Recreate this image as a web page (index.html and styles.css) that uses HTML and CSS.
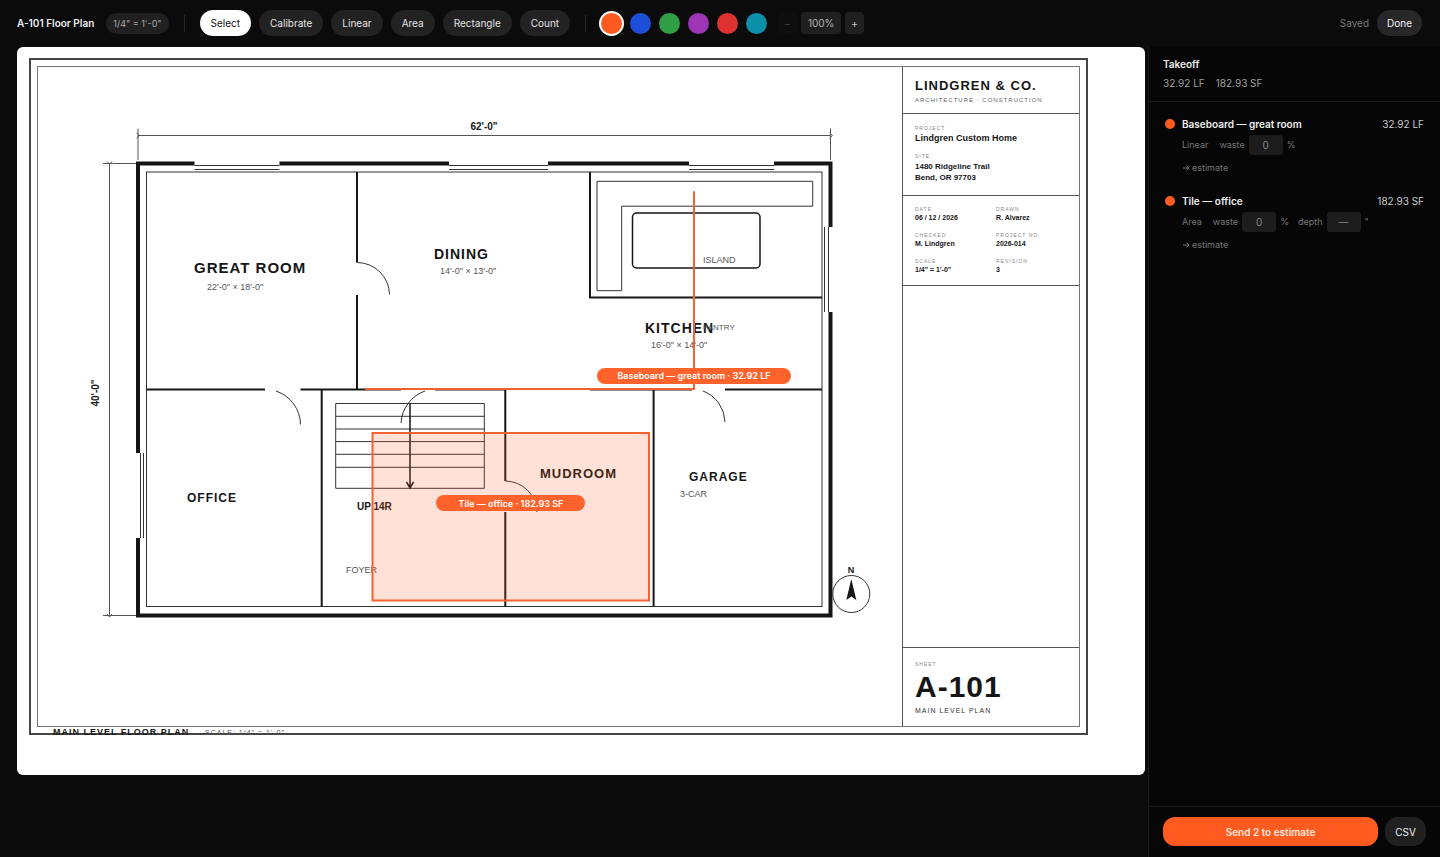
FILE: index.html
```html
<!DOCTYPE html>
<html lang="en">
<head>
<meta charset="utf-8">
<title>A-101 Floor Plan</title>
<link rel="stylesheet" href="styles.css">
</head>
<body class="app">
<header class="toolbar">
  <h1 class="doc-title">A-101 Floor Plan</h1>
  <span class="scale-chip">1/4" = 1'-0"</span>
  <span class="divider"></span>
  <nav class="tools" aria-label="Tools">
    <button class="pill pill-active" type="button">Select</button>
    <button class="pill" type="button">Calibrate</button>
    <button class="pill" type="button">Linear</button>
    <button class="pill" type="button">Area</button>
    <button class="pill" type="button">Rectangle</button>
    <button class="pill" type="button">Count</button>
  </nav>
  <span class="divider"></span>
  <div class="swatches">
    <button class="swatch swatch-orange swatch-active" type="button" aria-label="Orange"></button>
    <button class="swatch swatch-blue" type="button" aria-label="Blue"></button>
    <button class="swatch swatch-green" type="button" aria-label="Green"></button>
    <button class="swatch swatch-purple" type="button" aria-label="Purple"></button>
    <button class="swatch swatch-red" type="button" aria-label="Red"></button>
    <button class="swatch swatch-teal" type="button" aria-label="Teal"></button>
  </div>
  <div class="zoom">
    <button class="zoom-btn" type="button" aria-label="Zoom out" disabled>−</button>
    <button class="zoom-btn zoom-value" type="button">100%</button>
    <button class="zoom-btn" type="button" aria-label="Zoom in">+</button>
  </div>
  <span class="saved">Saved</span>
  <button class="pill pill-done" type="button">Done</button>
</header>

<div class="workspace">
<main class="canvas">
  <div class="sheet">
    <div class="frame">
      <div class="frame-inner">
        <svg class="plan" viewBox="38 67 864 659" role="img" aria-label="Main level floor plan">
          <!-- dimension lines -->
          <g class="thin">
            <path d="M138 135.500H830.500M138 128.500V160M830.500 128.500V160M136.500 133L139.500 135.500L136.500 138M829.500 133L832.500 135.500L829.500 138"/>
            <path d="M109.500 163.500V615.500M103 163.500H136M103 615.500H136M107 161.500L109.500 164.500L112 161.500M107 614L109.500 617L112 614"/>
          </g>
          <!-- exterior shell -->
          <rect class="shell" x="138" y="163.500" width="692.500" height="452"/>
          <rect class="line" x="146.500" y="172" width="675.500" height="434.500"/>
          <!-- windows -->
          <g class="opening">
            <rect x="194.500" y="161" width="85" height="6"/><rect x="449" y="161" width="99" height="6"/><rect x="689" y="161" width="85" height="6"/>
            <rect x="827" y="227" width="6" height="85"/><rect x="135" y="453" width="6" height="85"/>
          </g>
          <path class="line" d="M194.500 165.500H279.500M194.500 169.500H279.500M449 165.500H548M449 169.500H548M689 165.500H774M689 169.500H774M828.500 227V312M824.500 227V312M140.500 453V538M143.500 453V538"/>
          <!-- interior walls -->
          <path class="wall" d="M357 172V262.500M357 295V389.500M146.500 389.500H265M300.500 389.500H401M435 389.500H505M590 389.500H692M725 389.500H822M590 172V297.500H822M321.700 389.500V606.500M505.300 389.500V481M505.300 512V606.500M653.600 389.500V606.500"/>
          <!-- door swings -->
          <path class="line" d="M357 262.500A32.500 32.500 0 0 1 389.500 294.500M276 391A36 36 0 0 1 300.500 424.500M425 391A36 36 0 0 0 401 423M703 391A34 34 0 0 1 725 422M505.500 481A32 32 0 0 1 537 512"/>
          <!-- kitchen -->
          <path class="line" d="M597 181.300H812.700V206.200H621.700V290.700H597Z"/>
          <rect class="line heavy" x="632.500" y="213" width="127.500" height="55" rx="4"/>
          <!-- stairs -->
          <path class="line" d="M335.700 403.500H484.300V488.300H335.700ZM335.700 416.300H484M335.700 429H484M335.700 441.600H484M335.700 454.300H484M335.700 467.300H484"/>
          <path class="line heavy" d="M410 403.500V488M406.500 482L410 488L413.500 482"/>
          <!-- north arrow -->
          <circle class="line" cx="851.300" cy="594" r="18.500"/>
          <path class="ink" d="M851.300 579L856.300 600L851.300 596.500L846.300 600Z"/>
          <text class="north" x="851" y="573">N</text>

          <text class="dim-total" x="484" y="130">62'-0"</text>
          <text class="dim-total" transform="translate(99 393) rotate(-90)">40'-0"</text>
          <text class="room room-lg" x="194" y="273">GREAT ROOM</text>
          <text class="note" x="207" y="290">22'-0" × 18'-0"</text>
          <text class="room room-md" x="434" y="259">DINING</text>
          <text class="note" x="440" y="274">14'-0" × 13'-0"</text>
          <text class="room room-md" x="645" y="333">KITCHEN</text>
          <text class="note" x="651" y="348">16'-0" × 14'-0"</text>
          <text class="note" x="703" y="263">ISLAND</text>
          <text class="note note-sm" x="703" y="330">PANTRY</text>
          <text class="room room-sm" x="187" y="502">OFFICE</text>
          <text class="room" x="540" y="478">MUDROOM</text>
          <text class="room room-sm" x="689" y="481">GARAGE</text>
          <text class="note" x="680" y="497">3-CAR</text>
          <text class="note" x="346" y="573">FOYER</text>
          <text class="stair-label" x="357" y="510">UP 14R</text>
          <text class="caption" x="53" y="735">MAIN LEVEL FLOOR PLAN</text>
          <text class="caption-scale" x="205" y="735">SCALE: 1/4" = 1'-0"</text>

          <!-- takeoff overlay -->
          <rect class="area" x="372.500" y="433" width="276.500" height="167.500"/>
          <path class="run" d="M366 389H694V192"/>
          <rect class="tag" x="597" y="368" width="194" height="16" rx="8"/>
          <text class="tag-text" x="694" y="379">Baseboard — great room · 32.92 LF</text>
          <rect class="tag" x="436" y="495" width="149" height="16" rx="8"/>
          <text class="tag-text" x="511" y="507">Tile — office · 182.93 SF</text>
        </svg>

        <div class="title-block">
          <div class="tb-firm">
            <div class="firm">LINDGREN &amp; CO.</div>
            <div class="firm-sub">ARCHITECTURE · CONSTRUCTION</div>
          </div>
          <dl class="tb-project">
            <div><dt>PROJECT</dt><dd>Lindgren Custom Home</dd></div>
            <div><dt>SITE</dt><dd class="site">1480 Ridgeline Trail<br>Bend, OR 97703</dd></div>
          </dl>
          <dl class="tb-meta">
            <div><dt>DATE</dt><dd>06 / 12 / 2026</dd></div>
            <div><dt>DRAWN</dt><dd>R. Alvarez</dd></div>
            <div><dt>CHECKED</dt><dd>M. Lindgren</dd></div>
            <div><dt>PROJECT NO.</dt><dd>2026-014</dd></div>
            <div><dt>SCALE</dt><dd>1/4" = 1'-0"</dd></div>
            <div><dt>REVISION</dt><dd>3</dd></div>
          </dl>
          <div class="tb-sheet">
            <div class="tb-label">SHEET</div>
            <div class="sheet-no">A-101</div>
            <div class="sheet-name">MAIN LEVEL PLAN</div>
          </div>
        </div>
      </div>
    </div>
  </div>
</main>

<aside class="panel">
  <div class="panel-head">
    <h2 class="panel-title">Takeoff</h2>
    <div class="totals"><span>32.92 LF</span><span>182.93 SF</span></div>
  </div>
  <ul class="items">
    <li class="item">
      <span class="dot"></span>
      <span class="item-name">Baseboard — great room</span>
      <span class="item-qty">32.92 LF</span>
      <div class="item-fields">
        <span class="kind">Linear</span>
        <label class="field" for="waste1">waste</label><input class="num" id="waste1" placeholder="0"><span>%</span>
      </div>
      <button class="link" type="button"><svg class="arrow" viewBox="0 0 8 8" aria-hidden="true"><path d="M1 4H7M4.500 1.500L7 4L4.500 6.500"/></svg>estimate</button>
    </li>
    <li class="item">
      <span class="dot"></span>
      <span class="item-name">Tile — office</span>
      <span class="item-qty">182.93 SF</span>
      <div class="item-fields">
        <span class="kind">Area</span>
        <label class="field" for="waste2">waste</label><input class="num" id="waste2" placeholder="0"><span class="pct">%</span>
        <label class="field" for="depth2">depth</label><input class="num" id="depth2" placeholder="—"><span>"</span>
      </div>
      <button class="link" type="button"><svg class="arrow" viewBox="0 0 8 8" aria-hidden="true"><path d="M1 4H7M4.500 1.500L7 4L4.500 6.500"/></svg>estimate</button>
    </li>
  </ul>
  <div class="panel-foot">
    <button class="send" type="button">Send 2 to estimate</button>
    <button class="csv" type="button">CSV</button>
  </div>
</aside>
</div>
</body>
</html>
```
FILE: styles.css
```css
* { box-sizing: border-box; }

.app {
  margin: 0;
  min-height: 100vh;
  display: flex;
  flex-direction: column;
  background: #0b0b0b;
  color: #eee;
  font: 11px/16px Inter, "Liberation Sans", sans-serif;
}

button, input { font: inherit; color: inherit; border: 0; margin: 0; }
h1, h2, ul, dl, dd { margin: 0; padding: 0; }

/* Toolbar */
.toolbar {
  display: flex;
  align-items: center;
  height: 46px;
  padding: 0 18px 0 17px;
  font-size: 10px;
}
.doc-title { font-size: 10px; font-weight: 600; white-space: nowrap; }
.scale-chip {
  margin-left: 12px;
  padding: 0 7px;
  border-radius: 11px;
  background: #202020;
  color: #aaa;
  font-size: 9px;
  line-height: 21px;
  white-space: nowrap;
}
.divider { width: 1px; height: 17px; margin: 0 15px; background: #282828; }
.tools { display: flex; gap: 8px; }
.pill {
  height: 26px;
  padding: 0 11px;
  border-radius: 13px;
  background: #222;
  color: #e4e4e4;
}
.pill-active { background: #fff; color: #111; }
.pill-done { margin-left: 8px; padding: 0 10px; color: #f4f4f4; background: #272727; }
.swatches { display: flex; gap: 8px; }
.swatch { width: 21px; height: 21px; padding: 0; border-radius: 50%; }
.swatch-active { box-shadow: 0 0 0 2px #fff; }
.swatch-orange { background: #ff5a1f; }
.swatch-blue { background: #1d4ed8; }
.swatch-green { background: #2f9e44; }
.swatch-purple { background: #9c36b5; }
.swatch-red { background: #e03131; }
.swatch-teal { background: #0c8fa8; }
.zoom { display: flex; gap: 4px; margin-left: 11px; }
.zoom-btn {
  width: 19px;
  height: 22px;
  padding: 0;
  border-radius: 4px;
  background: #202020;
  color: #ccc;
}
.zoom-btn:disabled { background: #0e0e0e; color: #444; }
.zoom-value { width: 40px; color: #b4b4b4; }
.saved { margin-left: auto; color: #777; }

/* Drawing sheet */
.workspace { flex: 1; display: flex; }
.canvas { flex: 1; min-width: 0; padding: 1px 3px 0 17px; }
.sheet {
  padding: 11px 57px 40px 12px;
  border-radius: 6px;
  background: #fff;
  color: #161616;
  font-family: "Liberation Sans", Arial, sans-serif;
}
.frame { padding: 6px; border: 2px solid #454545; }
.frame-inner { display: flex; border: 1px solid #777; }
.plan { flex: 1; min-width: 0; display: block; overflow: visible; }

.plan .thin { fill: none; stroke: #555; stroke-width: 1; }
.plan .line { fill: none; stroke: #333; stroke-width: 1; }
.plan .heavy { stroke: #161616; stroke-width: 1.5; }
.plan .wall { fill: none; stroke: #161616; stroke-width: 2; }
.plan .shell { fill: none; stroke: #161616; stroke-width: 4; }
.plan .opening { fill: #fff; }
.plan .ink { fill: #161616; }
.plan text { fill: #161616; }
.plan .room { font-size: 13px; font-weight: 700; letter-spacing: 1px; }
.plan .room-sm { font-size: 12px; }
.plan .room-md { font-size: 14px; }
.plan .room-lg { font-size: 15px; }
.plan .note { font-size: 9px; fill: #555; }
.plan .note-sm { font-size: 8px; }
.plan .stair-label { font-size: 10px; font-weight: 700; }
.plan .dim-total { font-size: 10px; font-weight: 700; text-anchor: middle; }
.plan .north { font-size: 9px; font-weight: 700; text-anchor: middle; }
.plan .caption { font-size: 9px; font-weight: 700; letter-spacing: 1px; }
.plan .caption-scale { font-size: 7px; letter-spacing: 1px; fill: #555; }
.plan .area { fill: #ff5a1f; fill-opacity: 0.18; stroke: #f2632f; stroke-width: 2; }
.plan .run { fill: none; stroke: #f2632f; stroke-width: 2; stroke-linejoin: round; stroke-linecap: round; }
.plan .tag { fill: #ff622b; }
.plan .tag-text {
  fill: #fff;
  font-family: Inter, sans-serif;
  font-size: 9px;
  font-weight: 600;
  text-anchor: middle;
}

/* Title block */
.title-block {
  width: 177px;
  display: flex;
  flex-direction: column;
  border-left: 1px solid #555;
}
.tb-firm { height: 46px; padding: 11px 0 0 12px; }
.firm { font-size: 13px; font-weight: 700; line-height: 16px; letter-spacing: 1px; }
.firm-sub { font-size: 6px; line-height: 12px; letter-spacing: 1px; color: #666; }
dt, .tb-label { font-size: 5px; line-height: 8px; letter-spacing: 1px; color: #888; }
dd { font-weight: 700; }
.tb-project {
  display: flex;
  flex-direction: column;
  gap: 8px;
  padding: 10px 0 12px 12px;
  border-top: 1px solid #555;
  font-size: 9px;
  line-height: 11px;
}
.tb-project dd { padding-top: 1px; }
.tb-project .site { font-size: 8px; }
.tb-meta {
  display: grid;
  grid-template-columns: 1fr 1fr;
  row-gap: 8px;
  padding: 9px 2px 10px 12px;
  border-top: 1px solid #555;
  border-bottom: 1px solid #555;
  font-size: 7px;
  line-height: 10px;
}
.tb-sheet {
  margin-top: auto;
  padding: 12px 0 11px 12px;
  border-top: 1px solid #555;
}
.sheet-no { font-size: 30px; font-weight: 700; line-height: 38px; letter-spacing: 1px; }
.sheet-name { font-size: 7px; line-height: 9px; letter-spacing: 1px; color: #333; }

/* Takeoff panel */
.panel {
  width: 292px;
  display: flex;
  flex-direction: column;
  border-left: 1px solid #1b1b1b;
  background: #060606;
}
.panel-head { height: 56px; padding: 10px 14px; border-bottom: 1px solid #1b1b1b; }
.panel-title { font-size: 10px; font-weight: 600; line-height: 16px; }
.totals { display: flex; gap: 11px; padding-top: 3px; color: #a0a0a0; font-size: 10px; }
.items {
  display: flex;
  flex-direction: column;
  gap: 17px;
  padding: 14px 16px 0 16px;
  list-style: none;
}
.item {
  display: grid;
  grid-template-columns: 10px 1fr auto;
  column-gap: 7px;
  align-items: center;
  color: #777;
  font-size: 9px;
}
.dot { width: 10px; height: 10px; border-radius: 50%; background: #ff5a1f; }
.item-name { color: #eee; font-size: 10px; font-weight: 600; }
.item-qty { color: #ccc; font-size: 10px; }
.item-fields, .link { grid-column: 2 / 4; }
.item-fields { display: flex; align-items: center; padding-top: 3px; }
.kind { margin-right: 11px; }
.pct { margin-right: 9px; }
.num {
  width: 34px;
  height: 20px;
  margin: 0 4px;
  padding: 0;
  border-radius: 3px;
  background: #1c1c1c;
  font-size: 10px;
  text-align: center;
}
.num::placeholder { color: #888; opacity: 1; }
.link {
  display: flex;
  align-items: center;
  gap: 2px;
  justify-self: start;
  margin-top: 5px;
  padding: 0;
  background: none;
  line-height: 16px;
}
.arrow { width: 8px; height: 8px; fill: none; stroke: currentColor; stroke-width: 1; }
.panel-foot {
  display: flex;
  gap: 7px;
  margin-top: auto;
  padding: 10px 14px 11px 14px;
  border-top: 1px solid #1b1b1b;
  font-size: 10px;
}
.send {
  flex: 1;
  height: 29px;
  border-radius: 12px;
  background: #ff5a1f;
  color: #ffe9df;
  font-weight: 600;
}
.csv { width: 41px; height: 29px; padding: 0; border-radius: 13px; background: #202020; }
```
